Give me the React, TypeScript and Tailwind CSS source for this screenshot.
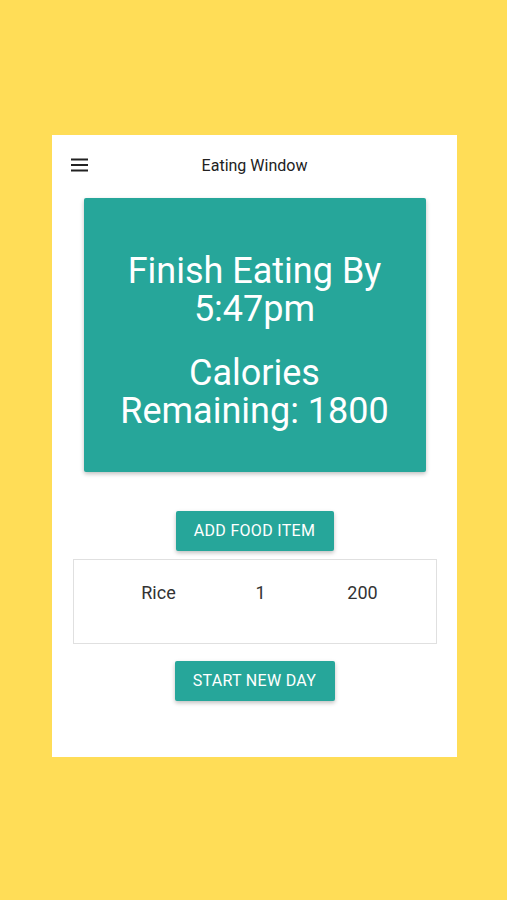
const foods = [{ name: 'Rice', qty: '1', cal: '200' }];

function Hamburger() {
  return (
    <svg width="17" height="14" viewBox="0 0 17 14" fill="none">
      <rect x="0" y="0.5" width="17" height="2" fill="#222" />
      <rect x="0" y="6" width="17" height="2" fill="#222" />
      <rect x="0" y="11.5" width="17" height="2" fill="#222" />
    </svg>
  );
}

export default function App() {
  return (
    <div className="min-h-screen bg-[#ffdd57] pt-[135px] font-['Roboto',sans-serif]">
      <div className="ml-[52px] w-[405px] h-[622px] bg-white flex flex-col items-center">
        {/* Header */}
        <div className="relative w-full h-[60px] flex items-center justify-center">
          <button className="absolute left-[19px] top-[23px]">
            <Hamburger />
          </button>
          <span className="text-[16px] text-[#222] mt-[2px]">Eating Window</span>
        </div>

        {/* Status card */}
        <div className="mt-[3px] w-[342px] h-[274px] bg-[#26a69a] rounded-[2px] shadow-[0_2px_4px_rgba(0,0,0,0.25)] flex flex-col items-center justify-center text-white text-[36px] leading-[38px] text-center">
          <p className="mt-[11px]">
            Finish Eating By
            <br />
            5:47pm
          </p>
          <p className="mt-[26px]">
            Calories
            <br />
            Remaining: 1800
          </p>
        </div>

        {/* Add food */}
        <button className="mt-[39px] w-[158px] h-[40px] bg-[#26a69a] text-white text-[16px] tracking-[0.3px] rounded-[2px] shadow-[0_2px_4px_rgba(0,0,0,0.25)]">
          ADD FOOD ITEM
        </button>

        {/* Food list */}
        <div className="mt-[8px] w-[364px] h-[85px] border border-[#e0e0e0] pt-[21px] pl-[34px]">
          {foods.map((f) => (
            <div key={f.name} className="grid grid-cols-3 w-[306px] text-[18px] text-[#333] text-center leading-[24px]">
              <span>{f.name}</span>
              <span>{f.qty}</span>
              <span>{f.cal}</span>
            </div>
          ))}
        </div>

        {/* New day */}
        <button className="mt-[17px] w-[160px] h-[40px] bg-[#26a69a] text-white text-[16px] tracking-[0.3px] rounded-[2px] shadow-[0_2px_4px_rgba(0,0,0,0.25)]">
          START NEW DAY
        </button>
      </div>
    </div>
  );
}
